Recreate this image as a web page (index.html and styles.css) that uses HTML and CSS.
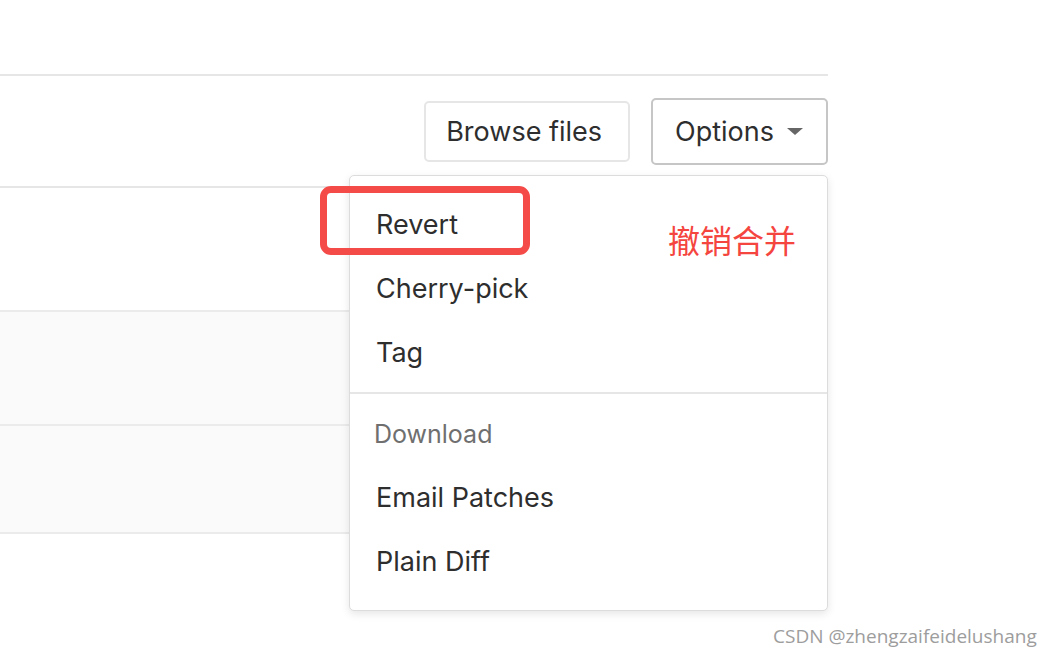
FILE: index.html
```html
<!DOCTYPE html>
<html lang="zh-CN">
<head>
    <meta charset="UTF-8">
    <meta name="viewport" content="width=device-width, initial-scale=1.0">
    <title>Commit options</title>
    <link rel="stylesheet" href="styles.css">
</head>
<body>
    <div class="page">
        <div class="top-bar"></div>
        <div class="commit-header">
            <button class="btn btn-browse">Browse files</button>
            <button class="btn btn-options">Options <span class="caret"></span></button>
        </div>
        <div class="commit-info"></div>
        <div class="commit-row"></div>
        <div class="commit-row"></div>

        <div class="dropdown">
            <ul>
                <li class="item">Revert</li>
                <li class="item">Cherry-pick</li>
                <li class="item">Tag</li>
                <li class="divider"></li>
                <li class="item header">Download</li>
                <li class="item">Email Patches</li>
                <li class="item">Plain Diff</li>
            </ul>
        </div>

        <div class="mark-box"></div>
        <div class="mark-text">撤销合并</div>
    </div>
    <div class="watermark">CSDN @zhengzaifeidelushang</div>
</body>
</html>
```

FILE: styles.css
```css
* {
    padding: 0;
    margin: 0;
    box-sizing: border-box;
}
body {
    background: #fff;
    font-family: Inter, "Noto Sans", sans-serif;
    color: #2e2e2e;
    width: 1056px;
    height: 658px;
    overflow: hidden;
    position: relative;
}
.page {
    width: 828px;
    position: relative;
}
.top-bar {
    height: 76px;
    border-bottom: 2px solid #e6e6e6;
}
.commit-header {
    height: 112px;
    border-bottom: 2px solid #e6e6e6;
    display: flex;
    justify-content: flex-end;
    align-items: center;
    gap: 21px;
}
.btn {
    font-family: inherit;
    font-size: 27px;
    color: #2e2e2e;
    background: #fff;
    height: 61px;
    padding: 0 20px;
    border: 2px solid #e6e6e6;
    border-radius: 5px;
    display: flex;
    align-items: center;
}
.btn-browse {
    padding: 0 26px 0 20px;
}
.btn-options {
    height: 67px;
    padding: 0 23px 0 22px;
    border-color: #c6c6c6;
}
.caret {
    width: 0;
    height: 0;
    margin-left: 13px;
    border-left: 8px solid transparent;
    border-right: 8px solid transparent;
    border-top: 7px solid #666;
}
.commit-info {
    height: 124px;
    border-bottom: 2px solid #ebebeb;
}
.commit-row {
    height: 114px;
    background: #fafafa;
    border-bottom: 2px solid #ebebeb;
}
.commit-row + .commit-row {
    height: 108px;
}
.dropdown {
    position: absolute;
    left: 349px;
    top: 175px;
    width: 479px;
    background: #fff;
    border: 1px solid #dcdcdc;
    border-radius: 5px;
    box-shadow: 0 3px 8px rgba(0, 0, 0, 0.1);
    padding: 17px 0 16px;
}
.dropdown ul {
    list-style: none;
}
.item {
    height: 64px;
    line-height: 64px;
    padding-left: 26px;
    font-size: 27px;
    color: #2e2e2e;
}
.item.header {
    padding-left: 24px;
    font-size: 25px;
    color: #6f6f6f;
}
.divider {
    height: 2px;
    margin: 7px 0 8px;
    background: #e6e6e6;
}
.mark-box {
    position: absolute;
    left: 320px;
    top: 186px;
    width: 210px;
    height: 69px;
    border: 7px solid #f54b48;
    border-radius: 11px;
}
.mark-text {
    position: absolute;
    left: 668px;
    top: 219px;
    font-family: "Noto Sans CJK SC", sans-serif;
    font-size: 32px;
    line-height: 40px;
    color: #f5453f;
}
.watermark {
    position: absolute;
    left: 773px;
    top: 623px;
    font-family: "Open Sans", sans-serif;
    font-size: 19px;
    color: #9d9d9d;
    text-shadow: 0 0 2px #fff;
}
```
